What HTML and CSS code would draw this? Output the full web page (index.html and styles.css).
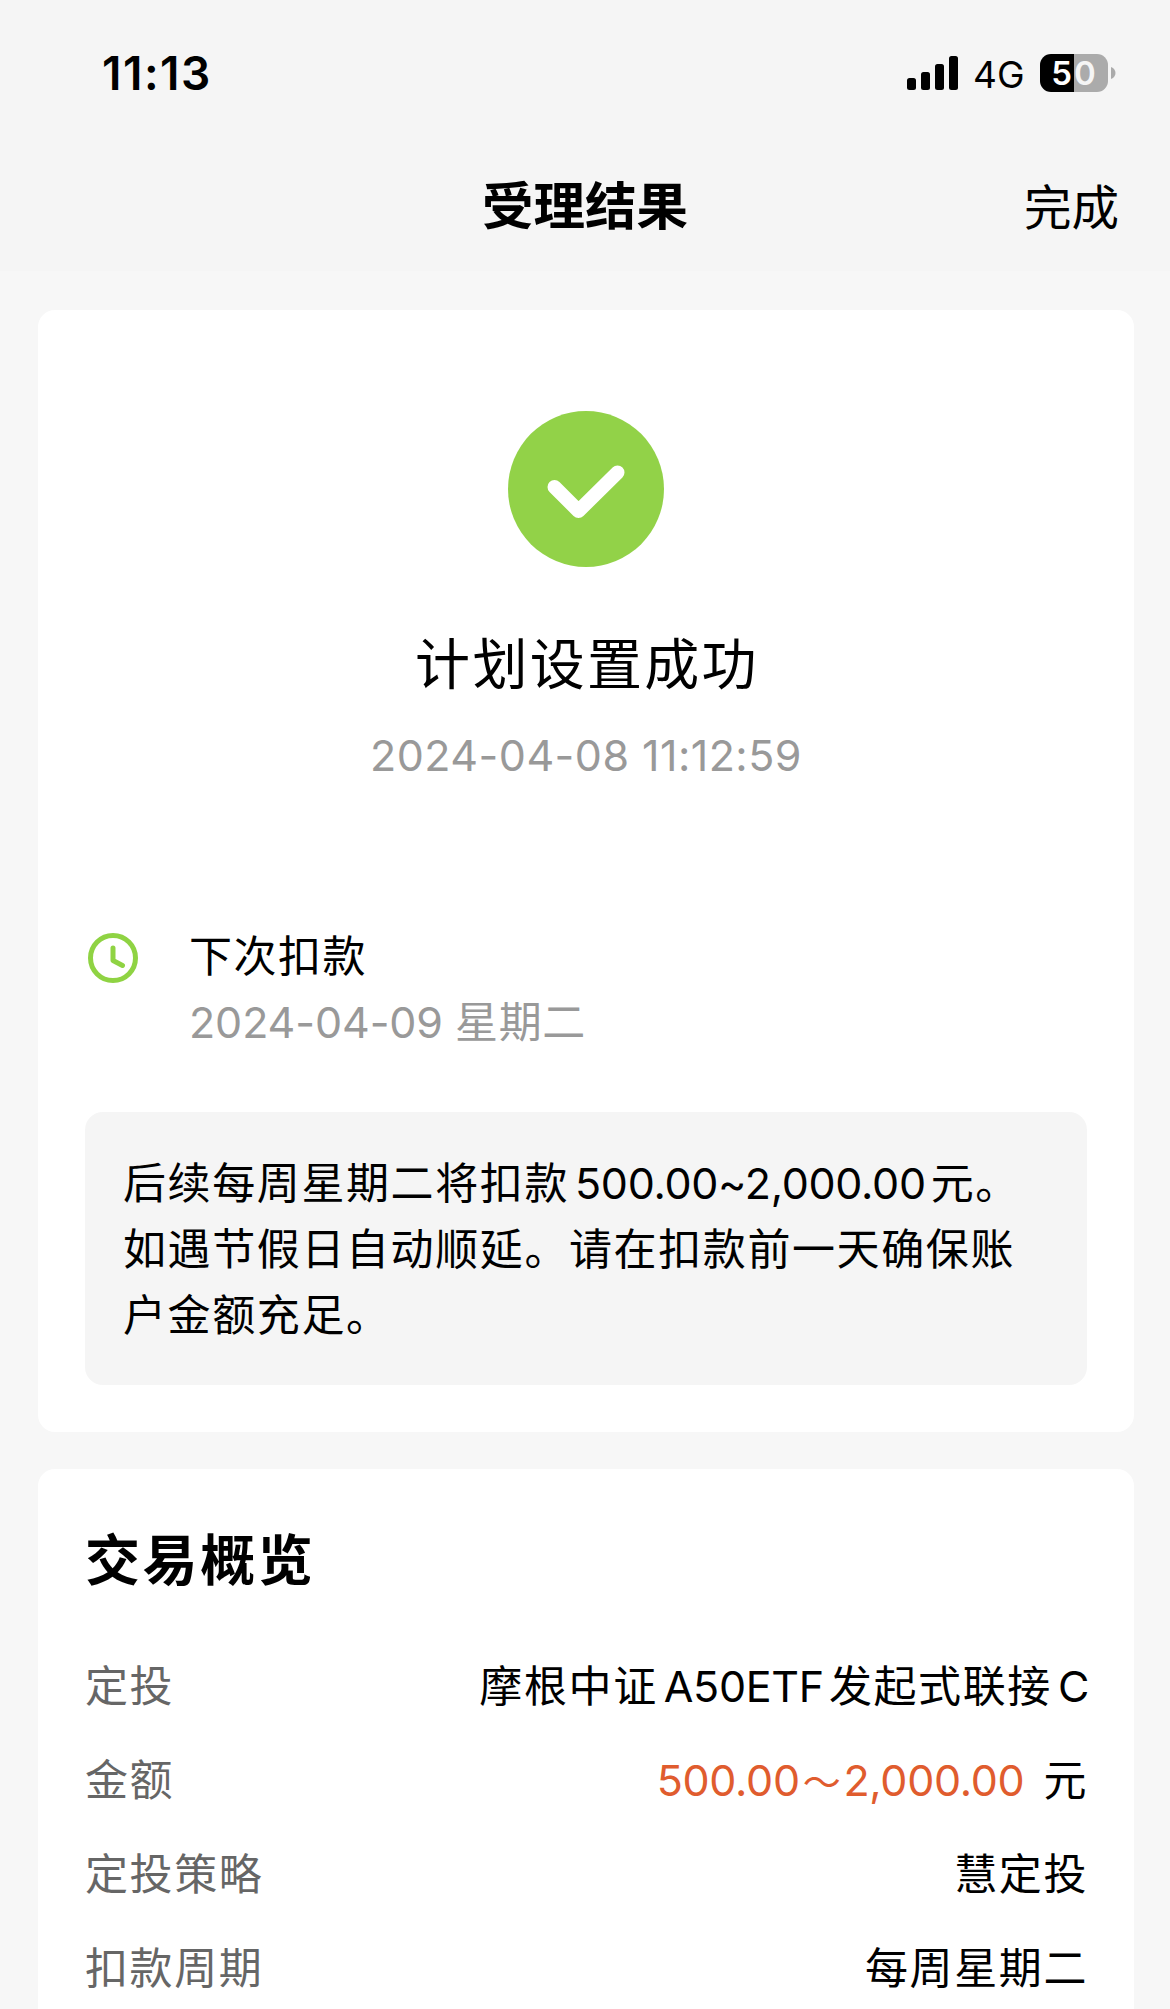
FILE: index.html
```html
<!DOCTYPE html>
<html lang="zh-CN">
<head>
  <meta charset="UTF-8">
  <meta name="viewport" content="width=device-width, initial-scale=1.0">
  <title>受理结果</title>
  <link rel="stylesheet" href="styles.css">
</head>
<body>

<header class="header">
  <div class="status-bar">
    <span class="time">11:13</span>
    <div class="status-right">
      <svg class="signal" width="52" height="36" viewBox="0 0 52 36">
        <rect x="0" y="23" width="9" height="12" rx="2.5"/>
        <rect x="14" y="17" width="9" height="18" rx="2.5"/>
        <rect x="28" y="9" width="9" height="26" rx="2.5"/>
        <rect x="42" y="1" width="9" height="34" rx="2.5"/>
      </svg>
      <span class="network">4G</span>
      <div class="battery"><span>5</span><span>0</span></div>
      <svg class="battery-tip" width="5" height="12" viewBox="0 0 5 12">
        <path d="M0 0c3 1 4.500 3.500 4.500 6S3 11 0 12z" fill="#ababab"/>
      </svg>
    </div>
  </div>
  <div class="nav-bar">
    <h1>受理结果</h1>
    <a class="done">完成</a>
  </div>
</header>

<main>
  <section class="card result">
    <svg class="success-icon" width="156" height="156" viewBox="0 0 156 156">
      <circle cx="78" cy="78" r="78" fill="#92d248"/>
      <path d="M46.500 76L70.500 100L109.500 61.500" fill="none" stroke="#fff" stroke-width="14" stroke-linecap="round" stroke-linejoin="round"/>
    </svg>
    <h2 class="result-title">计划设置成功</h2>
    <p class="result-time">2024-04-08 11:12:59</p>

    <div class="next">
      <svg width="50" height="50" viewBox="0 0 50 50" fill="none" stroke="#8fd343" stroke-width="5">
        <circle cx="25" cy="25" r="22.500"/>
        <path d="M25 15v12.500l9.500 5" stroke-linecap="round" stroke-linejoin="round"/>
      </svg>
      <div>
        <p class="next-title">下次扣款</p>
        <p class="next-date">2024-04-09 <span class="weekday">星期二</span></p>
      </div>
    </div>

    <div class="notice">后续每周星期二将扣款<span class="num">500.00~2,000.00</span>元。<br>如遇节假日自动顺延。请在扣款前一天确保账<br>户金额充足。</div>
  </section>

  <section class="card overview">
    <h2>交易概览</h2>
    <dl>
      <div class="row">
        <dt>定投</dt>
        <dd>摩根中证<span class="num">A50ETF</span>发起式联接<span class="num last">C</span></dd>
      </div>
      <div class="row">
        <dt>金额</dt>
        <dd><span class="amount">500.00<span class="tilde">～</span>2,000.00</span>元</dd>
      </div>
      <div class="row">
        <dt>定投策略</dt>
        <dd>慧定投</dd>
      </div>
      <div class="row">
        <dt>扣款周期</dt>
        <dd>每周星期二</dd>
      </div>
    </dl>
  </section>
</main>

</body>
</html>
```
FILE: styles.css
```css
* {
  box-sizing: border-box;
  margin: 0;
  padding: 0;
}
body {
  height: 2009px;
  overflow: hidden;
  background-color: #f7f7f7;
  color: #000;
  font-family: Inter, "Noto Sans CJK SC", sans-serif;
  font-size: 43px;
}
.header {
  height: 271px;
  background-color: #f5f5f5;
}
.status-bar {
  display: flex;
  justify-content: space-between;
  align-items: center;
  height: 146px;
  padding: 0 54px 0 102px;
}
.time {
  font-size: 46px;
  font-weight: 600;
  letter-spacing: 1.5px;
}
.status-right {
  display: flex;
  align-items: center;
}
.network {
  width: 67px;
  margin-left: 14px;
  padding-top: 2px;
  font-size: 37px;
}
.battery {
  display: flex;
  width: 68px;
  height: 38px;
  margin-right: 3px;
  border-radius: 11px;
  background: linear-gradient(to right, #000 50%, #ababab 50%);
  color: #fff;
  font-size: 33px;
  font-weight: 600;
  line-height: 38px;
}
.battery span {
  width: 50%;
}
.battery span:first-child {
  padding-right: 2px;
  text-align: right;
}
.battery span:last-child {
  color: #f5f5f5;
}
.nav-bar {
  display: grid;
  grid-template-columns: 1fr auto 1fr;
  align-items: center;
  height: 120px;
  padding: 0 51px;
}
.nav-bar h1 {
  grid-column: 2;
  font-size: 51.5px;
  font-weight: 700;
  line-height: 60px;
}
.done {
  justify-self: end;
  padding-top: 4px;
  font-size: 47.5px;
  line-height: 60px;
}
main {
  padding: 39px 36px 0 38px;
}
.card {
  border-radius: 17px;
  background-color: #fff;
}
.result {
  height: 1122px;
  padding: 101px 47px 0;
}
.success-icon {
  display: block;
  margin: 0 auto;
}
.result-title {
  margin-top: 61px;
  padding-left: 2px;
  font-size: 55px;
  font-weight: 400;
  letter-spacing: 2.3px;
  line-height: 72px;
  text-align: center;
}
.result-time {
  margin-top: 25px;
  color: #999;
  letter-spacing: 0.45px;
  line-height: 60px;
  text-align: center;
}
.next {
  display: flex;
  gap: 51px;
  margin-top: 137px;
  padding-left: 3px;
}
.next svg {
  margin-top: 11px;
}
.next-title {
  padding-top: 1px;
  letter-spacing: 1.5px;
  line-height: 66px;
}
.next-date {
  color: #999;
  letter-spacing: -0.1px;
  line-height: 67px;
}
.weekday {
  letter-spacing: 0.7px;
}
.notice {
  height: 273px;
  margin-top: 56px;
  padding: 38px 38px;
  border-radius: 18px;
  background-color: #f5f5f5;
  letter-spacing: 1.6px;
  line-height: 66px;
  white-space: nowrap;
}
.num {
  margin: 0 5px 0 6px;
  letter-spacing: -0.3px;
}
.num.last {
  margin-right: -1px;
}
.overview {
  height: 600px;
  margin-top: 37px;
  padding: 55px 47px 0;
}
.overview h2 {
  font-size: 55px;
  font-weight: 700;
  letter-spacing: 2.6px;
  line-height: 72px;
}
.overview dl {
  margin-top: 43px;
}
.row {
  display: flex;
  justify-content: space-between;
  height: 94px;
  letter-spacing: 1.6px;
  line-height: 94px;
  white-space: nowrap;
}
.row dt {
  color: #666;
}
.row dd {
  margin-right: -1px;
}
.amount {
  margin-right: 19px;
  color: #e05c2e;
  letter-spacing: -0.3px;
}
.tilde {
  margin: 0 3px;
  font-size: 38px;
}
```
